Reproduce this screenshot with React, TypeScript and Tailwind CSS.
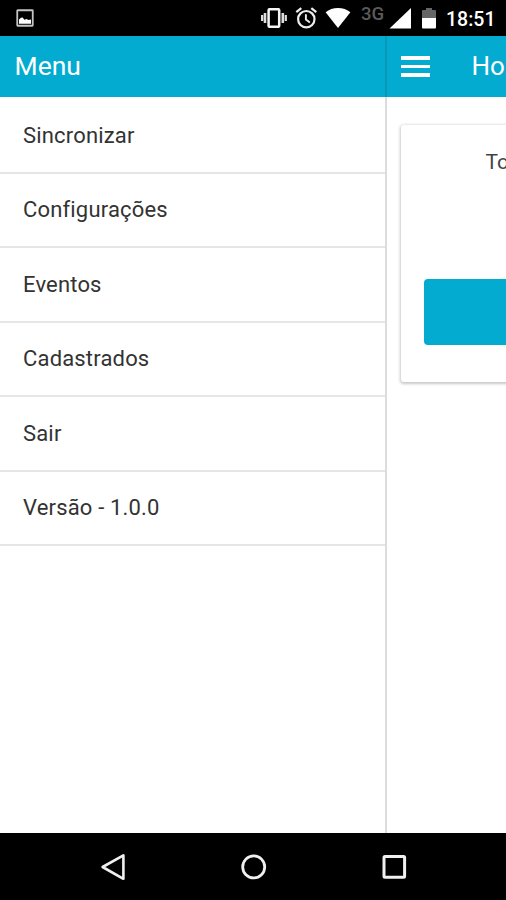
const MENU_ITEMS = [
  "Sincronizar",
  "Configurações",
  "Eventos",
  "Cadastrados",
  "Sair",
  "Versão - 1.0.0",
];

function StatusBar() {
  return (
    <div className="flex h-9 shrink-0 items-start bg-black text-white">
      {/* Picture notification */}
      <svg className="mt-[9px] ml-4 h-[18px] w-[18px] shrink-0" viewBox="0 0 18 18" fill="none">
        <rect x="1.25" y="1.25" width="15.5" height="15.5" rx="0.5" stroke="#c4c4c4" strokeWidth="1.8" />
        <path d="M3 14.8V10.6l2-1.8 1.6-.2 1.8 2.2 2.2-.7 2 .9 2.4-.5v4.3z" fill="#fff" />
      </svg>

      {/* Vibrate */}
      <svg className="mt-2 ml-[226px] h-5 w-[28px] shrink-0" viewBox="0 0 28 20">
        <rect x="8.6" y="1.2" width="10.6" height="17.6" rx="1" fill="none" stroke="#f5f5f5" strokeWidth="2.5" />
        <path d="M3.7 5h2.6v10H3.7zM1 7h2.2v6H1zM21.5 5h2.6v10h-2.6zM24.7 7h2.2v6h-2.2z" fill="#ddd" />
      </svg>

      {/* Alarm */}
      <svg
        className="mt-[7px] ml-[7px] h-[22px] w-[22px] shrink-0"
        viewBox="0 0 22 22"
        fill="none"
        stroke="#ededed"
        strokeWidth="2.2"
      >
        <circle cx="11.3" cy="12.2" r="8.2" />
        <path d="M1.3 5.2l5-4.1M21.3 5.2l-5-4.1" />
        <path d="M10.9 7.2v5.3l4 3" strokeWidth="1.9" />
      </svg>

      {/* Wifi */}
      <svg className="mt-2 ml-2 h-5 w-[26px] shrink-0" viewBox="0 0 26 20">
        <path d="M.6 4.3C4 1.5 8.3 0 13 0s9 1.5 12.4 4.3L13 20z" fill="#fff" />
      </svg>

      <span className="mt-[3.5px] ml-[10px] w-6 shrink-0 text-[18.5px] leading-[21px] font-medium text-[#5b5b5b]">
        3G
      </span>

      {/* Signal */}
      <svg className="mt-2 ml-[4px] h-[21px] w-[22px] shrink-0" viewBox="0 0 22 21">
        <path d="M22 0v20.5H.5z" fill="#fff" />
      </svg>

      {/* Battery */}
      <svg className="mt-2 ml-[11px] h-[21px] w-[14px] shrink-0" viewBox="0 0 14 21">
        <path d="M4 0h6v2h3a1 1 0 0 1 1 1v7H0V3a1 1 0 0 1 1-1h3z" fill="#666" />
        <path d="M0 10h14v9.5a1 1 0 0 1-1 1H1a1 1 0 0 1-1-1z" fill="#fff" />
      </svg>

      <span className="mt-[9px] ml-[10px] shrink-0 text-[19.5px] leading-[22px] font-medium">18:51</span>
    </div>
  );
}

function SideMenu() {
  return (
    <aside className="flex w-[387px] shrink-0 flex-col">
      <header className="flex h-[61px] shrink-0 items-center border-r-2 border-[#0797b7] bg-[#02abcf] pb-[2px] pl-[14.5px] text-[26.5px] text-white">
        Menu
      </header>
      <nav className="flex-1 border-r-2 border-[#dcdcdc] pt-[2px]">
        {MENU_ITEMS.map((item) => (
          <a
            key={item}
            className="flex h-[74.5px] items-center border-b-2 border-[#e6e6e6] pl-[23px] text-[22px] tracking-[0.17px] text-[#333]"
          >
            {item}
          </a>
        ))}
      </nav>
    </aside>
  );
}

function HomePage() {
  return (
    <main className="flex w-[119px] shrink-0 flex-col overflow-hidden">
      <header className="flex h-[61px] shrink-0 items-center bg-[#02abcf] text-[26px] text-white">
        <button className="ml-[14px] flex w-[29px] flex-col gap-[5px]" aria-label="Menu">
          <span className="block h-[3.5px] bg-white" />
          <span className="block h-[3.5px] bg-white" />
          <span className="block h-[3.5px] bg-white" />
        </button>
        <span className="ml-[41.5px]">Ho</span>
      </header>
      <section className="mt-7 ml-[14px] h-[257px] w-[360px] rounded-[3px] px-[23px] pt-[22px] shadow-[0_1px_3px_1px_rgba(0,0,0,0.22)]">
        <p className="pt-px pl-[61.5px] text-[21px] leading-7 text-[#444]">To</p>
        <div className="mt-[103px] h-[66px] rounded-[4px] bg-[#02abcf]" />
      </section>
    </main>
  );
}

export default function App() {
  return (
    <div className="flex h-[900px] w-[506px] flex-col overflow-hidden bg-white font-['Roboto',sans-serif]">
      <StatusBar />
      <div className="flex min-h-0 flex-1 overflow-hidden">
        <SideMenu />
        <HomePage />
      </div>
      <footer className="flex h-[67px] shrink-0 items-center bg-black pl-[100px]">
        <svg className="h-7 w-7" viewBox="0 0 28 28" fill="none" stroke="#f0f0f0" strokeWidth="2.6" strokeLinejoin="round">
          <path d="M23.4 2.4v23.4L2.6 14z" />
        </svg>
        <svg className="ml-[112px] h-7 w-7" viewBox="0 0 28 28" fill="none" stroke="#f0f0f0" strokeWidth="2.8">
          <circle cx="13.7" cy="13.9" r="11" />
        </svg>
        <svg className="ml-[112px] h-7 w-7" viewBox="0 0 28 28" fill="none" stroke="#f0f0f0" strokeWidth="3">
          <rect x="4" y="3.6" width="20.6" height="20.6" rx="1" />
        </svg>
      </footer>
    </div>
  );
}
